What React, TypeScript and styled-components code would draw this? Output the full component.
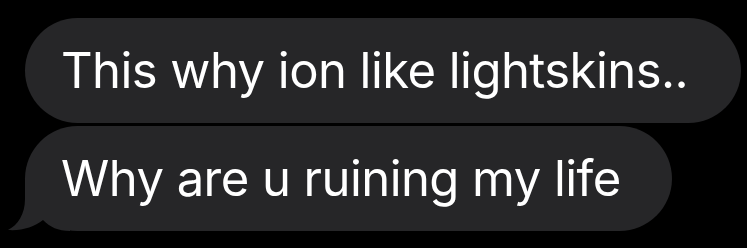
import React from "react";
import styled, { createGlobalStyle } from "styled-components";

const Global = createGlobalStyle`
  html, body {
    margin: 0;
    padding: 0;
    background: #000;
  }
  body {
    font-family: Inter, "Noto Sans", "Liberation Sans", sans-serif;
  }
`;

const Thread = styled.div`
  display: flex;
  flex-direction: column;
  align-items: flex-start;
  gap: 3px;
  padding: 18px 0 0 25px;
  width: 747px;
  height: 248px;
  box-sizing: border-box;
  background: #000;
  overflow: hidden;
`;

const Bubble = styled.div<{ $tail?: boolean }>`
  position: relative;
  display: flex;
  align-items: center;
  height: 105px;
  box-sizing: border-box;
  padding: 0 ${(p) => (p.$tail ? 51 : 53)}px 0 36px;
  border-radius: 53px;
  background: #262628;
  color: #fff;
  font-size: 49px;
  font-weight: 400;
  letter-spacing: -0.55px;
  white-space: nowrap;
`;

const Text = styled.span`
  position: relative;
`;

const Tail = styled.svg`
  position: absolute;
  left: -17px;
  bottom: 0;
  width: 62px;
  height: 52px;
`;

export default function App() {
  return (
    <>
      <Global />
      <Thread>
        <Bubble>
          <Text>This why ion like lightskins..</Text>
        </Bubble>
        <Bubble $tail>
          <Tail viewBox="0 0 62 52">
            <path
              d="M17 0 L17 20 C17 35 10 46 0 51 C14 52 26 48 35 41 C42 48 50 52 62 52 L62 0 Z"
              fill="#262628"
            />
          </Tail>
          <Text>Why are u ruining my life</Text>
        </Bubble>
      </Thread>
    </>
  );
}
